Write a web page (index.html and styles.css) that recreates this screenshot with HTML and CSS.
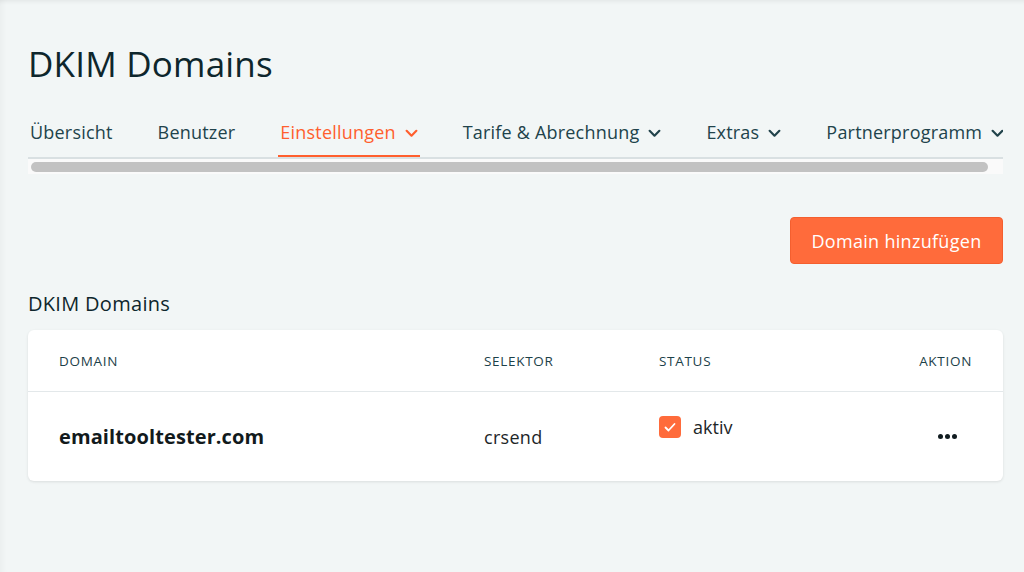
FILE: index.html
```html
<!DOCTYPE html>
<html lang="de">
<head>
<meta charset="utf-8">
<title>DKIM Domains</title>
<link rel="stylesheet" href="styles.css">
</head>
<body>
<div class="page">
  <h1 class="title">DKIM Domains</h1>
  <div class="tabs-wrap">
    <nav class="tabs">
      <a class="tab">Übersicht</a>
      <a class="tab">Benutzer</a>
      <a class="tab active">Einstellungen <svg class="chev" viewBox="0 0 12 8"><path d="M1.5 1.5 L6 6 L10.5 1.5"/></svg></a>
      <a class="tab">Tarife &amp; Abrechnung <svg class="chev" viewBox="0 0 12 8"><path d="M1.5 1.5 L6 6 L10.5 1.5"/></svg></a>
      <a class="tab">Extras <svg class="chev" viewBox="0 0 12 8"><path d="M1.5 1.5 L6 6 L10.5 1.5"/></svg></a>
      <a class="tab">Partnerprogramm <svg class="chev" viewBox="0 0 12 8"><path d="M1.5 1.5 L6 6 L10.5 1.5"/></svg></a>
    </nav>
    <div class="scrolltrack"><div class="scrollthumb"></div></div>
  </div>
  <div class="actions">
    <button class="btn">Domain hinzufügen</button>
  </div>
  <h2 class="subtitle">DKIM Domains</h2>
  <div class="card">
    <div class="row head">
      <div>DOMAIN</div>
      <div>SELEKTOR</div>
      <div>STATUS</div>
      <div class="right">AKTION</div>
    </div>
    <div class="row body">
      <div class="domain">emailtooltester.com</div>
      <div class="sel">crsend</div>
      <div class="status">
        <span class="check"><svg viewBox="0 0 22 22"><path d="M6.5 11.5 L9.5 14.5 L15.5 8"/></svg></span>
        <span>aktiv</span>
      </div>
      <div class="right dots"><span></span><span></span><span></span></div>
    </div>
  </div>
</div>
</body>
</html>
```

FILE: styles.css
```css
* { box-sizing: border-box; }
html, body { margin: 0; padding: 0; }
body {
  background: #f2f6f6;
  font-family: "Open Sans", "Noto Sans", sans-serif;
  color: #102a30;
  width: 1024px;
  height: 572px;
  overflow: hidden;
}
.page {
  height: 572px;
  padding: 0 21px 0 28px;
  box-shadow: inset 0 5px 5px -4px rgba(0,0,0,0.08), inset 8px 0 8px -8px rgba(0,0,0,0.06);
  overflow: hidden;
}
.title {
  margin: 0;
  padding-top: 42px;
  font-size: 35px;
  font-weight: 400;
  line-height: 44px;
  color: #0e262c;
  letter-spacing: 0.2px;
}
.tabs-wrap {
  margin-top: 34px;
  width: 975px;
}
.tabs {
  display: flex;
  white-space: nowrap;
  overflow: hidden;
  border-bottom: 2px solid #d9e0e2;
  height: 39px;
}
.tab {
  display: flex;
  align-items: flex-start;
  gap: 9px;
  font-size: 18px;
  line-height: 24px;
  letter-spacing: 0.2px;
  color: #21434b;
  padding: 0 2px;
  margin-right: 41px;
  height: 37px;
  flex: none;
}
.tab.active {
  color: #ff5f2e;
  border-bottom: 2px solid #ff5f2e;
}
.chev {
  width: 13px;
  height: 9px;
  margin-top: 9px;
  fill: none;
  stroke: currentColor;
  stroke-width: 2;
  stroke-linecap: round;
  stroke-linejoin: round;
}
.scrolltrack {
  background: #fafafa;
  height: 15px;
  padding: 3px 15px 2px 3px;
}
.scrollthumb {
  height: 10px;
  border-radius: 5px;
  background: #c2c2c2;
}
.actions {
  display: flex;
  justify-content: flex-end;
  margin-top: 43px;
}
.btn {
  font-family: inherit;
  font-size: 18px;
  letter-spacing: 0.3px;
  color: #fff;
  background: #ff6b3b;
  border: 1px solid #f45f2f;
  border-radius: 4px;
  width: 213px;
  height: 47px;
  cursor: pointer;
}
.subtitle {
  margin: 27px 0 0;
  font-size: 20px;
  font-weight: 400;
  line-height: 26px;
  letter-spacing: 0.3px;
  color: #0e262c;
}
.card {
  margin-top: 13px;
  width: 975px;
  background: #fff;
  border-radius: 6px;
  box-shadow: 0 1px 3px rgba(0,0,0,0.1);
}
.row {
  display: grid;
  grid-template-columns: 425px 175px 1fr auto;
  padding: 0 31px;
}
.row.head {
  height: 62px;
  align-items: center;
  border-bottom: 1px solid #e3e8ea;
  font-size: 13.5px;
  letter-spacing: 0.7px;
  color: #1c4149;
  padding-top: 1px;
}
.right { text-align: right; }
.row.body {
  height: 89px;
  align-items: center;
}
.domain {
  font-size: 20px;
  font-weight: 700;
  letter-spacing: 0.1px;
  color: #121a1c;
}
.sel {
  font-size: 18px;
  letter-spacing: 0.3px;
  color: #1d2628;
}
.status {
  display: flex;
  align-items: center;
  gap: 12px;
  font-size: 18px;
  color: #1d2628;
  align-self: start;
  padding-top: 23px;
}
.check {
  width: 22px;
  height: 22px;
  border-radius: 4px;
  background: #ff6b3b;
  display: inline-flex;
}
.check svg {
  width: 22px;
  height: 22px;
  fill: none;
  stroke: #fff;
  stroke-width: 1.8;
  stroke-linecap: round;
  stroke-linejoin: round;
}
.dots {
  display: flex;
  justify-content: flex-end;
  gap: 2px;
  padding-right: 15px;
}
.dots span {
  width: 5px;
  height: 5px;
  border-radius: 50%;
  background: #111c20;
}
```
